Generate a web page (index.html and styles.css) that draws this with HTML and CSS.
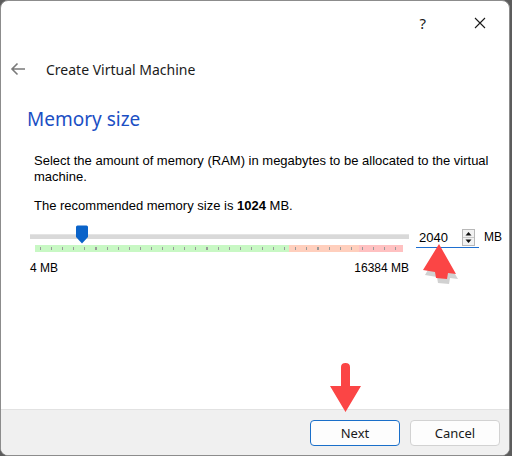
FILE: index.html
```html
<!DOCTYPE html>
<html lang="en">
<head>
    <meta charset="UTF-8">
    <title>Create Virtual Machine</title>
    <link rel="stylesheet" href="styles.css">
</head>
<body>
    <div class="window">
        <div class="titlebar">
            <span class="helpBtn">?</span>
            <svg class="closeBtn" width="12" height="12" viewBox="0 0 12 12">
                <path d="M1 1 L11 11 M11 1 L1 11" stroke="#1a1a1a" stroke-width="1.1" fill="none"/>
            </svg>
        </div>

        <div class="header">
            <svg class="backArrow" width="16" height="14" viewBox="0 0 16 14">
                <path d="M15 7 H2 M7.5 1.5 L2 7 L7.5 12.5" stroke="#7a7a7a" stroke-width="1.6" fill="none"/>
            </svg>
            <span class="headerTitle">Create Virtual Machine</span>
        </div>

        <div class="content">
            <h2 class="pageTitle">Memory size</h2>
            <div class="page">
                <p class="info">Select the amount of memory (RAM) in megabytes to be allocated to the virtual machine.</p>
                <p class="info">The recommended memory size is <b>1024</b> MB.</p>

                <div class="sliderRow">
                    <div class="slider">
                        <div class="track"></div>
                        <svg class="handle" width="14" height="19" viewBox="0 0 14 19">
                            <path d="M1 2 Q1 0.5 2.5 0.5 H11.5 Q13 0.5 13 2 V12 L7 18.5 L1 12 Z" fill="#0a63c9"/>
                        </svg>
                        <div class="ticks"></div>
                        <div class="scaleLabels">
                            <span>4 MB</span>
                            <span>16384 MB</span>
                        </div>
                    </div>
                    <div class="spinbox">
                        <span class="spinValue">2040</span>
                        <div class="spinButtons">
                            <svg width="13" height="17" viewBox="0 0 13 17">
                                <rect x="0.5" y="0.5" width="12" height="16" fill="#f2f2f2" stroke="#b8b8b8"/>
                                <line x1="1" y1="8.5" x2="12" y2="8.5" stroke="#c8c8c8"/>
                                <path d="M3.5 6.5 L6.5 3 L9.5 6.5 Z" fill="#111"/>
                                <path d="M3.5 10.5 L6.5 14 L9.5 10.5 Z" fill="#111"/>
                            </svg>
                        </div>
                    </div>
                    <span class="unit">MB</span>
                </div>
            </div>
        </div>

        <div class="footer">
            <button class="btn btnDefault">Next</button>
            <button class="btn">Cancel</button>
        </div>

        <svg class="markArrow upArrow" width="46" height="44" viewBox="0 0 46 44">
            <path d="M21 4 L6 30 L18 32 L19 38 L30 39 L31 33 L39 34 Z" fill="#7a7a7a" opacity="0.35" transform="translate(1 3)"/>
            <path d="M21 2 L5 28 L17 30 L18 36 L29 37 L30 31 L38 32 Z" fill="#fb4545"/>
        </svg>
        <svg class="markArrow downArrow" width="40" height="52" viewBox="0 0 40 52">
            <path d="M15 5 Q15 1 19.5 1 Q24 1 24 5 V24 H35 L19.5 50 L4 24 H15 Z" fill="#fb4545"/>
        </svg>
    </div>
</body>
</html>
```

FILE: styles.css
```css
body {
    margin: 0;
    padding: 0;
    background-color: #5c5c5c;
    font-family: 'Liberation Sans', Arial, sans-serif;
}
.window {
    position: relative;
    width: 508px;
    height: 454px;
    background-color: #ffffff;
    border: 1px solid #8c8c8c;
    border-radius: 8px;
    overflow: hidden;
    display: flex;
    flex-direction: column;
}
.titlebar {
    height: 44px;
    display: flex;
    align-items: center;
    justify-content: flex-end;
    gap: 48px;
    padding-right: 23px;
}
.helpBtn {
    font-family: 'Noto Sans', sans-serif;
    font-size: 15px;
    color: #1a1a1a;
}
.closeBtn {
    display: block;
}
.header {
    height: 48px;
    display: flex;
    align-items: center;
}
.backArrow {
    margin-left: 9px;
    margin-right: 20px;
}
.headerTitle {
    font-family: 'Noto Sans', sans-serif;
    font-size: 14px;
    color: #1b1b1b;
}
.content {
    flex: 1;
}
.pageTitle {
    margin: 12px 0 0 26px;
    font-family: 'Noto Sans', sans-serif;
    font-weight: normal;
    font-size: 19px;
    line-height: 28px;
    color: #1b4fc4;
}
.page {
    padding: 20px 0 0 33px;
}
.info {
    margin: 0 0 13px 0;
    font-size: 13px;
    line-height: 16px;
    color: #000000;
}
.sliderRow {
    display: flex;
    align-items: flex-start;
    margin-top: 10px;
}
.slider {
    position: relative;
    flex-shrink: 0;
    width: 379px;
    margin-left: -4px;
}
.track {
    height: 4px;
    margin-top: 7px;
    background-color: #d9d9d9;
    border-top: 1px solid #e4e4e4;
}
.handle {
    position: absolute;
    left: 45px;
    top: -2px;
}
.ticks {
    height: 7px;
    margin: 6px 6px 0 5px;
    background:
        repeating-linear-gradient(to right, #999999 0, #999999 1px, transparent 1px, transparent 11.1px) 5px 2px / 100% 3px no-repeat,
        linear-gradient(to right, #c8f8c4 0, #c8f8c4 69%, #ffcfbd 69%, #ffcfbd 88%, #ffc1c1 88%, #ffc1c1 100%);
}
.scaleLabels {
    display: flex;
    justify-content: space-between;
    margin-top: 9px;
    font-size: 12px;
    color: #000000;
}
.spinbox {
    display: flex;
    align-items: center;
    flex-shrink: 0;
    width: 63px;
    height: 20px;
    margin-left: 7px;
    border-bottom: 1px solid #1f6fd0;
}
.spinValue {
    flex: 1;
    padding-left: 3px;
    font-size: 13px;
}
.spinButtons {
    display: flex;
    margin-right: 4px;
}
.unit {
    margin-left: 5px;
    margin-top: 3px;
    font-size: 12px;
}
.footer {
    height: 45px;
    background-color: #f0f0f0;
    border-top: 1px solid #e2e2e2;
    display: flex;
    align-items: center;
    justify-content: flex-end;
    gap: 10px;
    padding-right: 9px;
}
.btn {
    width: 90px;
    height: 26px;
    font-family: 'Noto Sans', sans-serif;
    font-size: 13px;
    color: #1a1a1a;
    background-color: #fdfdfd;
    border: 1px solid #d2d2d2;
    border-radius: 4px;
}
.btnDefault {
    border-color: #1a6fc9;
}
.markArrow {
    position: absolute;
}
.upArrow {
    left: 417px;
    top: 241px;
}
.downArrow {
    left: 325px;
    top: 361px;
}
```
